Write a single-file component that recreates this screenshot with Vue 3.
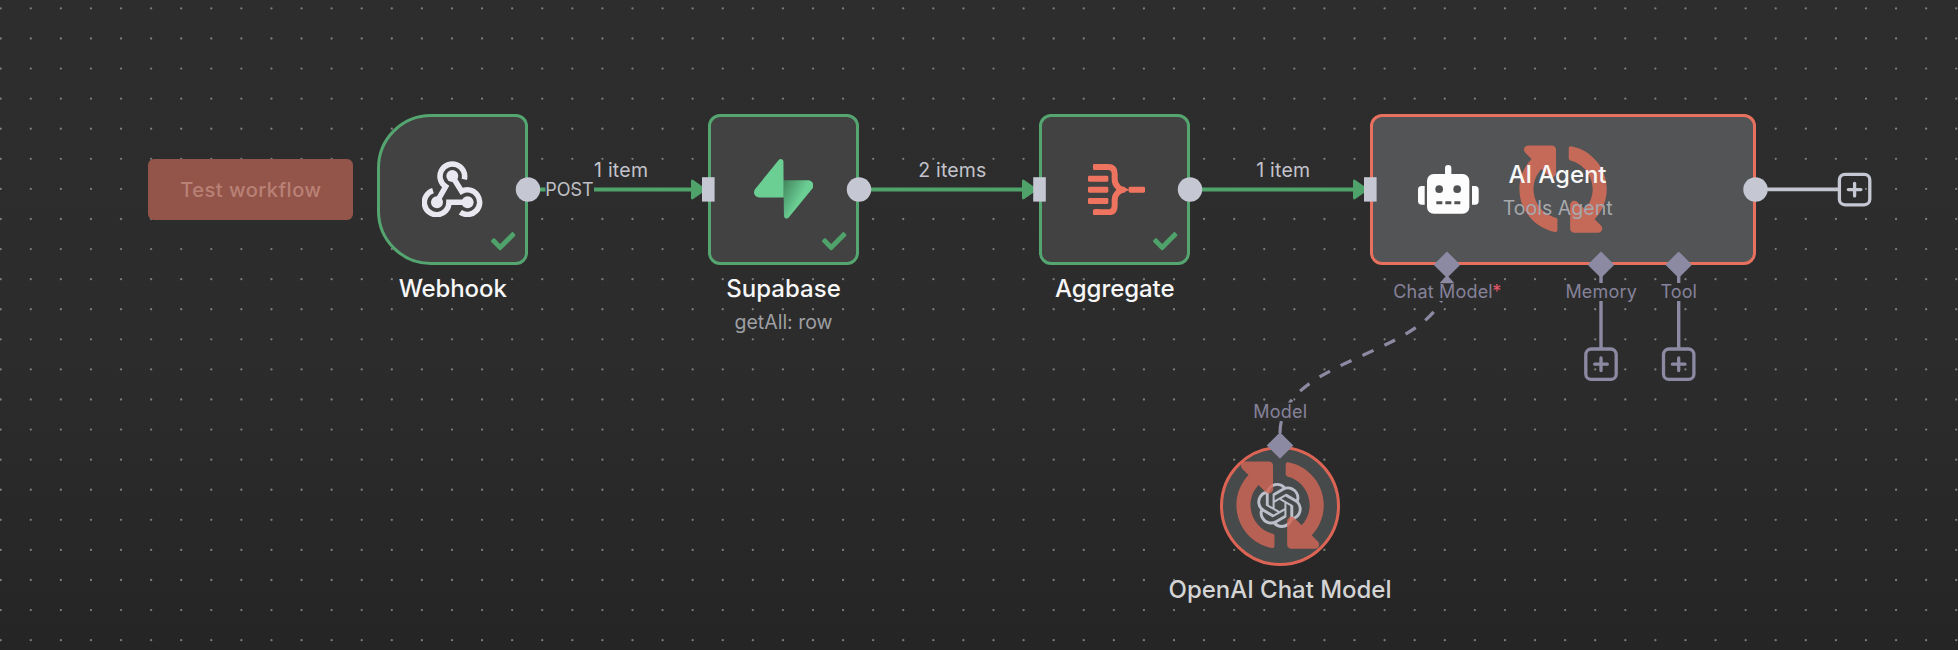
<script setup>
const STEP = 30.085
const dots = []
for (let r = 0; r < 22; r++) {
  for (let c = 0; c < 66; c++) dots.push({ x: 0.7 + c * STEP, y: 8.4 + r * STEP })
}

const CHECK =
  'M173.898 439.404l-166.4-166.4c-9.997-9.997-9.997-26.206 0-36.204l36.203-36.204c9.997-9.998 26.207-9.998 36.204 0L192 312.69 432.095 72.596c9.997-9.997 26.207-9.997 36.204 0l36.203 36.204c9.997 9.997 9.997 26.206 0 36.204l-294.4 294.401c-9.998 9.997-26.207 9.997-36.204-.001z'
const SYNC =
  'M370.72 133.28C339.458 104.008 298.888 87.962 255.848 88c-77.458.068-144.328 53.178-162.791 126.85-1.344 5.363-6.122 9.15-11.651 9.15H24.103c-7.498 0-13.194-6.807-11.807-14.176C33.933 94.924 134.813 8 256 8c66.448 0 126.791 26.136 171.315 68.685L463.03 40.97C478.149 25.851 504 36.559 504 57.941V192c0 13.255-10.745 24-24 24H345.941c-21.382 0-32.09-25.851-16.971-40.971l41.75-41.749zM32 296h134.059c21.382 0 32.09 25.851 16.971 40.971l-41.75 41.75c31.262 29.273 71.835 45.319 114.876 45.28 77.418-.07 144.315-53.144 162.787-126.849 1.344-5.363 6.122-9.15 11.651-9.15h57.304c7.498 0 13.194 6.807 11.807 14.176C478.067 417.076 377.187 504 256 504c-66.448 0-126.791-26.136-171.315-68.685L48.97 471.03C33.851 486.149 8 475.441 8 454.059V320c0-13.255 10.745-24 24-24z'

const arrows = [691, 1022, 1353]
const inputs = [702, 1033.2, 1364]
const outputs = [528, 859, 1190, 1755.5]
const diamonds = [
  { x: 1447, y: 264.7 },
  { x: 1601, y: 264.7 },
  { x: 1678.7, y: 264.7 },
  { x: 1280, y: 445.5 },
]
const pluses = [
  { x: 1854.6, y: 189.6, light: true },
  { x: 1601, y: 364.2 },
  { x: 1678.7, y: 364.2 },
]
const labels = [
  { t: 'Webhook', x: 398.8, y: 297.4, w: 108, k: 'title' },
  { t: 'Supabase', x: 726.2, y: 297.4, w: 114.6, k: 'title' },
  { t: 'Aggregate', x: 1055, y: 297.4, w: 119.6, k: 'title' },
  { t: 'getAll: row', x: 734.5, y: 328.8, w: 98, k: 'sub' },
  { t: 'POST', x: 545.2, y: 196, w: 48.5, k: 'edge' },
  { t: '1 item', x: 594, y: 177, w: 54, k: 'count' },
  { t: '2 items', x: 918.3, y: 177, w: 68, k: 'count' },
  { t: '1 item', x: 1256.2, y: 177, w: 54, k: 'count' },
  { t: 'Chat Model', x: 1393.2, y: 298.2, w: 99.5, k: 'port' },
  { t: '*', x: 1492.3, y: 298.2, w: 9, k: 'port required' },
  { t: 'Memory', x: 1565.4, y: 298.2, w: 71.5, k: 'port' },
  { t: 'Tool', x: 1660.6, y: 298.2, w: 36.2, k: 'port' },
  { t: 'Model', x: 1253.2, y: 418.4, w: 54, k: 'port' },
  { t: 'AI Agent', x: 1508.5, y: 182.5, w: 98, k: 'title' },
  { t: 'Tools Agent', x: 1502.7, y: 214.6, w: 110, k: 'sub cool' },
  { t: 'OpenAI Chat Model', x: 1168.5, y: 597.8, w: 223, k: 'title dim' },
]
</script>

<template>
  <main class="canvas">
    <svg class="layer" viewBox="0 0 1958 650">
      <circle v-for="(d, i) in dots" :key="i" class="dot" :cx="d.x" :cy="d.y" r="1.15" />
    </svg>

    <button class="run">Test workflow</button>

    <svg class="layer" viewBox="0 0 1958 650">
      <g class="flow">
        <path d="M528 189.4H545.5M594 189.4H694M859 189.4H1026M1190 189.4H1357" />
      </g>
      <path class="next" d="M1755 189.4H1838" />
      <path class="stem" d="M1601 265V283M1601 301V348M1678.7 265V283M1678.7 301V348" />
      <path class="dashed" d="M1280 433C1280 353 1447 357 1447 277" />
      <rect class="mask" x="1393" y="283" width="108" height="18" />
      <rect class="mask" x="1253" y="402.5" width="54" height="18.5" />
      <path class="tip" d="M1447 275l7.5 8.3h-15z" />
    </svg>

    <section class="node webhook">
      <svg class="glyph" viewBox="157 182 182 170">
        <g fill="none" stroke="#e9e8f0" stroke-width="16.5">
          <path d="M284 237A37 37 0 1 0 228 259L201 306" />
          <path d="M190 271A37 37 0 1 0 238 306H294" />
          <path d="M272 336A37 37 0 1 0 276 273L248 228" />
        </g>
        <g fill="#e9e8f0">
          <circle cx="248" cy="227" r="18" />
          <circle cx="202" cy="306" r="18" />
          <circle cx="294" cy="306" r="18" />
        </g>
      </svg>
      <svg class="check" viewBox="0 0 512 512"><path :d="CHECK" /></svg>
    </section>

    <section class="node supabase">
      <svg class="glyph" viewBox="0 0 109 113" preserveAspectRatio="none">
        <defs>
          <linearGradient id="bolt" x1="54" y1="50" x2="88" y2="68" gradientUnits="userSpaceOnUse">
            <stop offset="0" stop-color="#458c63" />
            <stop offset="1" stop-color="#6bce93" />
          </linearGradient>
        </defs>
        <path fill="url(#bolt)" d="M63.7076 110.284C60.8481 113.885 55.0502 111.912 54.9813 107.314L53.9738 40.0627L99.1935 40.0627C107.384 40.0627 111.952 49.5228 106.859 55.9374L63.7076 110.284Z" />
        <path fill="#6bce93" d="M45.317 2.07103C48.1765 -1.53037 53.9745 0.442937 54.0434 5.041L54.4849 72.2922H9.83113C1.64038 72.2922 -2.92775 62.8321 2.1655 56.4175L45.317 2.07103Z" />
      </svg>
      <svg class="check" viewBox="0 0 512 512"><path :d="CHECK" /></svg>
    </section>

    <section class="node aggregate">
      <svg class="glyph" viewBox="684 192 171 154">
        <g fill="#ef7460">
          <rect x="684" y="227" width="61" height="18" rx="4" />
          <rect x="684" y="260" width="61" height="18" rx="4" />
          <rect x="684" y="294" width="61" height="18" rx="4" />
          <rect x="806" y="260" width="49" height="18" rx="4" />
          <rect x="699" y="192" width="20" height="18" rx="4" />
          <rect x="699" y="328" width="20" height="18" rx="4" />
          <rect x="776" y="260" width="20" height="18" rx="4" />
        </g>
        <path fill="none" stroke="#ef7460" stroke-width="18" d="M705 201H744Q764 201 764 221V238Q764 252 774 261Q779 266 786 269Q779 272 774 277Q764 286 764 300V317Q764 337 744 337H705" />
      </svg>
      <svg class="check" viewBox="0 0 512 512"><path :d="CHECK" /></svg>
    </section>

    <section class="node agent">
      <svg class="glyph" viewBox="655 196 182 147">
        <g fill="#fdfdfd">
          <rect x="736" y="196" width="19" height="40" rx="9" />
          <rect x="682" y="223" width="127" height="119" rx="20" />
          <path d="M675 259V315H666Q655 315 655 304V270Q655 259 666 259Z" />
          <path d="M817 259V315H826Q837 315 837 304V270Q837 259 826 259Z" />
        </g>
        <g fill="#505254">
          <circle cx="718.5" cy="268.5" r="11.5" />
          <circle cx="772.5" cy="268.5" r="11.5" />
          <path d="M710 305h18v9h-18zM737 305h18v9h-18zM764 305h18v9h-18z" />
        </g>
      </svg>
      <svg class="sync" viewBox="0 0 512 512"><path :d="SYNC" /></svg>
    </section>

    <section class="node openai">
      <svg class="glyph" viewBox="0 0 24 24">
        <path d="M22.2819 9.8211a5.9847 5.9847 0 0 0-.5157-4.9108 6.0462 6.0462 0 0 0-6.5098-2.9A6.0651 6.0651 0 0 0 4.9807 4.1818a5.9847 5.9847 0 0 0-3.9977 2.9 6.0462 6.0462 0 0 0 .7427 7.0966 5.98 5.98 0 0 0 .511 4.9107 6.051 6.051 0 0 0 6.5146 2.9001A5.9847 5.9847 0 0 0 13.2599 24a6.0557 6.0557 0 0 0 5.7718-4.2058 5.9894 5.9894 0 0 0 3.9977-2.9001 6.0557 6.0557 0 0 0-.7475-7.0729zm-9.022 12.6081a4.4755 4.4755 0 0 1-2.8764-1.0408l.1419-.0804 4.7783-2.7582a.7948.7948 0 0 0 .3927-.6813v-6.7369l2.02 1.1686a.071.071 0 0 1 .038.052v5.5826a4.504 4.504 0 0 1-4.4945 4.4944zm-9.6607-4.1254a4.4708 4.4708 0 0 1-.5346-3.0137l.142.0852 4.783 2.7582a.7712.7712 0 0 0 .7806 0l5.8428-3.3685v2.3324a.0804.0804 0 0 1-.0332.0615L9.74 19.9502a4.4992 4.4992 0 0 1-6.1408-1.6464zM2.3408 7.8956a4.485 4.485 0 0 1 2.3655-1.9728V11.6a.7664.7664 0 0 0 .3879.6765l5.8144 3.3543-2.0201 1.1685a.0757.0757 0 0 1-.071 0l-4.8303-2.7865A4.504 4.504 0 0 1 2.3408 7.872zm16.5963 3.8558L13.1038 8.364 15.1192 7.2a.0757.0757 0 0 1 .071 0l4.8303 2.7913a4.4944 4.4944 0 0 1-.6765 8.1042v-5.6772a.79.79 0 0 0-.407-.667zm2.0107-3.0231l-.142-.0852-4.7735-2.7818a.7759.7759 0 0 0-.7854 0L9.409 9.2297V6.8974a.0662.0662 0 0 1 .0284-.0615l4.8303-2.7866a4.4992 4.4992 0 0 1 6.6802 4.66zM8.3065 12.863l-2.02-1.1638a.0804.0804 0 0 1-.038-.0567V6.0742a4.4992 4.4992 0 0 1 7.3757-3.4537l-.142.0805L8.704 5.459a.7948.7948 0 0 0-.3927.6813zm1.0976-2.3654l2.602-1.4998 2.6069 1.4998v2.9994l-2.5974 1.4997-2.6067-1.4997Z" />
      </svg>
      <svg class="sync" viewBox="0 0 512 512"><path :d="SYNC" /></svg>
    </section>

    <svg class="layer" viewBox="0 0 1958 650">
      <path v-for="x in arrows" :key="x" class="arrow" :d="`M${x} 181.5Q${x} 178.5 ${x + 2.6} 180.2L${x + 13} 187.5V191.5L${x + 2.6} 198.8Q${x} 200.5 ${x} 197.5Z`" />
      <rect v-for="x in inputs" :key="x" class="port-shape" :x="x" y="177.2" width="12.6" height="24.4" />
      <circle v-for="x in outputs" :key="x" class="port-shape" :cx="x" cy="189.5" r="12.2" />
      <path v-for="d in diamonds" :key="d.x" class="diamond" :d="`M${d.x} ${d.y - 13.3}l13.3 13.3l-13.3 13.3l-13.3 -13.3z`" />
      <g v-for="p in pluses" :key="p.x" class="plus" :class="{ light: p.light }">
        <rect :x="p.x - 15.2" :y="p.y - 15.2" width="30.4" height="30.4" rx="5.5" />
        <path :d="`M${p.x - 6.3} ${p.y}h12.6M${p.x} ${p.y - 6.3}v12.6`" />
      </g>
      <text v-for="l in labels" :key="l.t + l.x" :class="l.k" :x="l.x" :y="l.y" :textLength="l.w">{{ l.t }}</text>
    </svg>
  </main>
</template>

<style>
body {
  background: #2a2a2a;
}
</style>

<style scoped>
.canvas {
  position: relative;
  width: 1958px;
  height: 650px;
  overflow: hidden;
  background: linear-gradient(#2d2d2d 0%, #2c2c2c 55%, #252525 100%);
  font-family: Inter, 'Liberation Sans', sans-serif;
}
.layer {
  position: absolute;
  inset: 0;
  width: 1958px;
  height: 650px;
}
.dot { fill: #7d7d7d; }
.run {
  position: absolute;
  left: 148.3px;
  top: 159.3px;
  width: 205.2px;
  height: 60.5px;
  padding: 0;
  border: 0;
  border-radius: 6px;
  background: #935549;
  color: #b98176;
  font: 500 20px/60px Inter, 'Liberation Sans', sans-serif;
  letter-spacing: 0.5px;
}
.flow path { stroke: #4fa36a; stroke-width: 4; }
.next { stroke: #c3c5d0; stroke-width: 3.8; }
.stem { stroke: #8c8aa3; stroke-width: 3.4; }
.dashed {
  fill: none;
  stroke: #8c8aa3;
  stroke-width: 3.2;
  stroke-dasharray: 12 12;
}
.mask { fill: #2d2d2d; }
.tip { fill: #8c8aa3; }
.node {
  position: absolute;
  box-sizing: border-box;
  top: 114px;
  width: 151px;
  height: 151px;
  border: 3px solid #55a570;
  border-radius: 12px;
  background: #424242;
}
.node svg { position: absolute; }
.webhook { left: 377px; border-radius: 54px 12px 12px 54px; }
.supabase { left: 708px; }
.aggregate { left: 1039px; }
.agent { left: 1370px; width: 386px; border-color: #e8705f; background: #525456; }
.openai {
  left: 1220px;
  top: 446px;
  width: 120px;
  height: 120px;
  border-color: #dc6455;
  border-radius: 50%;
  background: #474a4a;
}
.webhook .glyph { left: 42.3px; top: 43.6px; width: 60.6px; height: 56.6px; }
.supabase .glyph { left: 43px; top: 42.3px; width: 59.4px; height: 60px; }
.aggregate .glyph { left: 46px; top: 47px; width: 57px; height: 51.4px; }
.agent .glyph { left: 45.3px; top: 48.4px; width: 60.7px; height: 49px; }
.openai .glyph { left: 34.4px; top: 34px; width: 45px; height: 45px; fill: #bcbfca; }
.check { left: 111.4px; top: 111.7px; width: 24.4px; height: 24.4px; fill: #4fa36a; }
.sync { width: 90.2px; height: 90.2px; transform: rotate(-90deg); }
.agent .sync { left: 144.9px; top: 27.3px; fill: #c56958; }
.openai .sync { left: 11.9px; top: 11.4px; fill: #d46757; opacity: 0.8; }
.arrow { fill: #4fa36a; }
.port-shape { fill: #c5c7d3; }
.diamond { fill: #8c8aa3; }
.plus rect, .plus path { fill: none; stroke: #8c8aa3; stroke-width: 3.3; stroke-linecap: round; }
.plus.light rect, .plus.light path { stroke: #c5c7d3; }
text { font-family: Inter, 'Liberation Sans', sans-serif; }
.title { font-size: 24px; font-weight: 500; fill: #f7f7f7; }
.dim { fill: #d4d4d4; }
.sub { font-size: 19.5px; fill: #9e9fa3; }
.cool { fill: #a6a8ad; }
.edge { font-size: 18px; fill: #bfc0c6; }
.count { font-size: 19.5px; fill: #c3c3cc; }
.port { font-size: 18px; fill: #85829a; }
.required { fill: #e5576a; }
</style>
